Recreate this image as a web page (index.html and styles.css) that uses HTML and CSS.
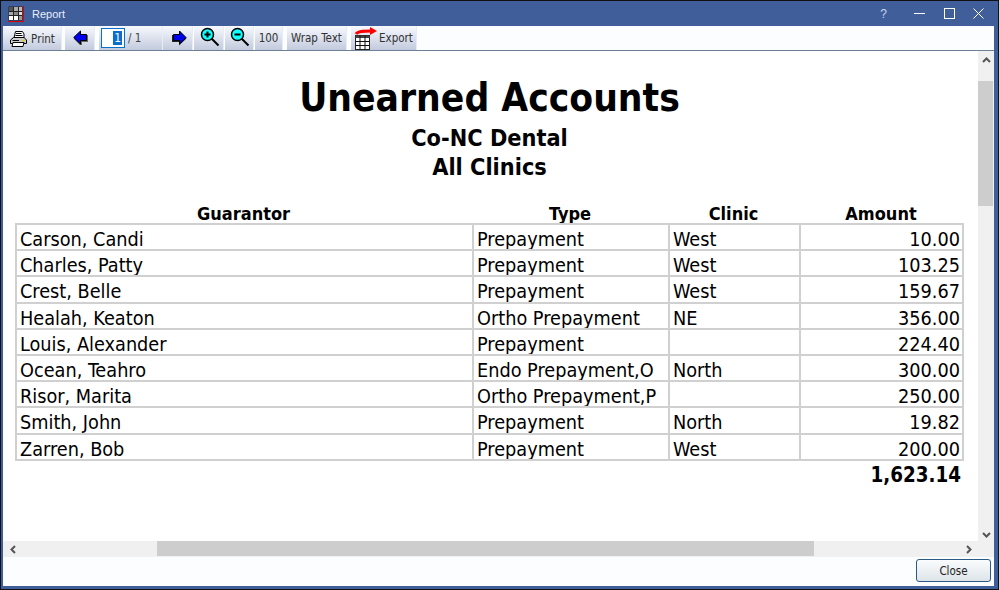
FILE: index.html
```html
<!DOCTYPE html>
<html lang="en">
<head>
<meta charset="utf-8">
<title>Report</title>
<link rel="stylesheet" href="styles.css">
</head>
<body>
<div class="window">
  <header class="titlebar">
    <svg class="app-icon" width="16" height="16" viewBox="0 0 16 16">
      <rect x="0.500" y="0.500" width="14" height="14" fill="#222"/>
      <path d="M0 15.500H15.500V0" fill="none" stroke="#d00"/>
      <g fill="#ddd"><rect x="1" y="1" width="4" height="4" fill="#555"/><rect x="6" y="1" width="4" height="4" fill="#aaa"/><rect x="11" y="1" width="3" height="4" fill="#bbb"/><rect x="1" y="6" width="4" height="3" fill="#aaa"/><rect x="6" y="6" width="4" height="3" fill="#888"/><rect x="11" y="6" width="3" height="3"/><rect x="1" y="10" width="4" height="4" fill="#fff"/><rect x="6" y="10" width="4" height="4" fill="#fff"/><rect x="11" y="10" width="3" height="4" fill="#999"/></g>
    </svg>
    <span class="title">Report</span>
    <span class="help">?</span>
    <svg class="win-btn min" width="11" height="11" viewBox="0 0 11 11"><path d="M0 5.500H11" stroke="#fff"/></svg>
    <svg class="win-btn max" width="11" height="11" viewBox="0 0 11 11"><rect x="0.500" y="0.500" width="10" height="10" fill="none" stroke="#fff"/></svg>
    <svg class="win-btn close-x" width="11" height="11" viewBox="0 0 11 11"><path d="M0.500 0.500L10.500 10.500M10.500 0.500L0.500 10.500" stroke="#fff"/></svg>
  </header>

  <nav class="toolbar">
    <div class="tool t-print">
      <svg width="17" height="16" viewBox="0 0 17 16"><path d="M5.500 0.500H12.500L14 3V7H4Z" fill="#fff" stroke="#000"/><path d="M6 2.500H11.500M5.500 4.500H12.500" stroke="#000"/><path d="M3.500 6.500H14L16.500 9V12.500H0.500V9Z" fill="#ccc" stroke="#000"/><path d="M2.500 9.500H9" stroke="#000"/><path d="M12 9.500H14.500" stroke="#dc0" stroke-width="1.500"/><path d="M3 11.500H14L13 15.500H2Z" fill="#fff" stroke="#000"/></svg>
      <span>Print</span>
    </div>
    <div class="tool t-nav">
      <svg width="16" height="16" viewBox="0 0 16 16"><path d="M15 5V12H9V15H7L1 9L7 2H8V5Z" fill="#666"/><path d="M13.500 4.500V10.500H7.500V14L0.700 7.500L7.500 1V4.500Z" fill="#00e" stroke="#000"/></svg>
    </div>
    <div class="tool t-page">
      <span class="page-box"><span class="page-sel">1</span></span>
      <span class="page-of">/ 1</span>
    </div>
    <div class="tool t-nav">
      <svg width="16" height="16" viewBox="0 0 16 16"><path d="M1 5H8V1L15.500 8.500L8 15.500V12H1Z" fill="#222"/><path d="M2.500 4.500H8.500V1L15 7.500L8.500 14V10.500H2.500Z" fill="#00e" stroke="#000"/></svg>
    </div>
    <div class="tool t-zoom">
      <svg width="20" height="20" viewBox="0 0 20 20"><path d="M11.500 11.500L18.500 18.500" stroke="#000" stroke-width="2"/><circle cx="7.500" cy="7.500" r="6" fill="#1ff" stroke="#000" stroke-width="1.500"/><path d="M4.500 7.500H10.500M7.500 4.500V10.500" stroke="#000" stroke-width="2"/></svg>
    </div>
    <div class="tool t-zoom t-zoomout">
      <svg width="20" height="20" viewBox="0 0 20 20"><path d="M11.500 11.500L18.500 18.500" stroke="#000" stroke-width="2"/><circle cx="7.500" cy="7.500" r="6" fill="#1ff" stroke="#000" stroke-width="1.500"/><path d="M4.500 7.500H10.500" stroke="#000" stroke-width="2"/></svg>
    </div>
    <div class="tool t-100">100</div>
    <div class="tool t-wrap">Wrap Text</div>
    <div class="tool t-export">
      <svg width="23" height="23" viewBox="0 0 23 23"><path d="M2 7C4 4 9 4 17 4" fill="none" stroke="#f00" stroke-width="3"/><path d="M16 0L23 4L16 8Z" fill="#f00"/><rect x="1.500" y="8.500" width="14" height="14" fill="#fff" stroke="#222"/><path d="M1.500 8.500H15.500V11H1.500Z" fill="#444"/><path d="M1.500 14.500H15.500M1.500 18.500H15.500M6 8.500V22.500M11 8.500V22.500" stroke="#111"/></svg>
      <span>Export</span>
    </div>
  </nav>

  <div class="viewer">
    <main class="canvas">
      <div class="sheet">
        <h1 class="r-title">Unearned Accounts</h1>
        <h2 class="r-sub">Co-NC Dental</h2>
        <h2 class="r-sub">All Clinics</h2>
        <div class="report-head">
          <span>Guarantor</span><span>Type</span><span>Clinic</span><span>Amount</span>
        </div>
        <table class="report">
          <tr><td>Carson, Candi</td><td>Prepayment</td><td>West</td><td class="num">10.00</td></tr>
          <tr><td>Charles, Patty</td><td>Prepayment</td><td>West</td><td class="num">103.25</td></tr>
          <tr><td>Crest, Belle</td><td>Prepayment</td><td>West</td><td class="num">159.67</td></tr>
          <tr><td>Healah, Keaton</td><td>Ortho Prepayment</td><td>NE</td><td class="num">356.00</td></tr>
          <tr><td>Louis, Alexander</td><td>Prepayment</td><td></td><td class="num">224.40</td></tr>
          <tr><td>Ocean, Teahro</td><td>Endo Prepayment,O</td><td>North</td><td class="num">300.00</td></tr>
          <tr><td>Risor, Marita</td><td>Ortho Prepayment,P</td><td></td><td class="num">250.00</td></tr>
          <tr><td>Smith, John</td><td>Prepayment</td><td>North</td><td class="num">19.82</td></tr>
          <tr><td>Zarren, Bob</td><td>Prepayment</td><td>West</td><td class="num">200.00</td></tr>
        </table>
        <div class="total">1,623.14</div>
      </div>
    </main>
    <aside class="vscroll">
      <svg width="9" height="6" viewBox="0 0 9 6"><path d="M1 5L4.500 1.500L8 5" fill="none" stroke="#555" stroke-width="2"/></svg>
      <div class="vtrack"><div class="vthumb"></div></div>
      <svg width="9" height="6" viewBox="0 0 9 6"><path d="M1 1L4.500 4.500L8 1" fill="none" stroke="#555" stroke-width="2"/></svg>
    </aside>
  </div>
  <div class="hscroll">
    <svg width="6" height="9" viewBox="0 0 6 9"><path d="M5 1L1.500 4.500L5 8" fill="none" stroke="#555" stroke-width="2"/></svg>
    <div class="htrack"><div class="hthumb"></div></div>
    <svg width="6" height="9" viewBox="0 0 6 9"><path d="M1 1L4.500 4.500L1 8" fill="none" stroke="#555" stroke-width="2"/></svg>
  </div>
  <footer class="actions">
    <button class="close-btn" type="button">Close</button>
  </footer>
</div>
</body>
</html>
```

FILE: styles.css
```css
* { box-sizing: border-box; }
html, body { margin: 0; height: 100%; }
body { font-family: "DejaVu Sans Condensed", "DejaVu Sans", sans-serif; background: #fff; overflow: hidden; }

.window { width: 999px; height: 590px; display: flex; flex-direction: column; border: 1px solid #111; padding: 0 4px 3px 2px; background: #3f5e9a; }

.titlebar { height: 25px; flex: none; display: flex; align-items: center; color: #fff; margin: 0 -4px 0 -2px; padding: 0 0 0 7px; background: #3f5e9a; }
.app-icon { flex: none; }
.title { margin-left: 8px; font: 11px "Liberation Sans", sans-serif; color: #e8eefa; flex: 1; }
.help { font: 12px "Liberation Sans", sans-serif; color: #c8d4ee; margin-right: 27px; }
.win-btn { flex: none; }
.min { margin-right: 19px; }
.max { margin-right: 18px; }
.close-x { margin-right: 14px; }

.toolbar { height: 25px; flex: none; display: flex; background: #fcfdff; border-bottom: 1px solid #6e7f96; font: 11.500px "DejaVu Sans Condensed", "Liberation Sans", sans-serif; color: #333; }
.tool { height: 24px; display: flex; align-items: center; justify-content: center; background: linear-gradient(#f7f9fd, #c2cadd); margin-right: 1px; border-right: 1px solid #e8ecf4; }
.tool span { white-space: nowrap; }
.t-print { width: 59px; gap: 4px; margin-right: 3px; padding-top: 1px; padding-left: 1px; }
.t-nav { width: 30px; padding-left: 3px; }
.t-page { width: 64px; gap: 3px; margin-left: 3px; justify-content: flex-start; padding-left: 2px; margin-right: 0; }
.t-zoom { width: 30px; padding-bottom: 2px; padding-left: 2px; }
.t-zoomout { width: 29px; }
.t-100 { width: 28px; margin-right: 4px; }
.t-wrap { width: 60px; margin-right: 4px; }
.t-export { width: 66px; gap: 2px; justify-content: flex-start; padding-left: 3px; }
.page-box { width: 24px; height: 20px; background: #fff; border: 1px solid #0a6ecb; display: flex; justify-content: flex-end; align-items: center; padding-right: 2px; }
.page-sel { background: #0a6ecb; color: #fff; font-size: 12px; line-height: 14px; padding: 0 1px; }
.page-of { color: #444; font-size: 11.500px; }

.viewer { flex: 1; min-height: 0; display: flex; }
.canvas { flex: 1; min-width: 0; background: #fff; overflow: hidden; }
.sheet { width: 975px; display: flex; flex-direction: column; align-items: stretch; padding: 22px 14px 0 12px; color: #000; }
.r-title { margin: 0; font-size: 38.600px; line-height: 50px; font-weight: 700; text-align: center; }
.r-sub { margin: 0; font-size: 23.300px; line-height: 29px; font-weight: 700; text-align: center; }
.report-head { margin-top: 22px; height: 20px; display: grid; grid-template-columns: 457px 196px 131px 164px; font-size: 18px; font-weight: 700; line-height: 21px; text-align: center; }
.report { border-collapse: collapse; table-layout: fixed; width: 949px; font-size: 19.700px; }
.report td { height: 26.200px; padding: 6px 2px 0 3px; border: 2px solid #d0d0d0; white-space: nowrap; overflow: hidden; line-height: 18px; vertical-align: top; }
.report td:nth-child(1) { width: 457px; }
.report td:nth-child(2) { width: 196px; }
.report td:nth-child(3) { width: 131px; }
.report td.num { text-align: right; }
.total { width: 948px; text-align: right; font-size: 20.400px; font-weight: 700; line-height: 28px; padding-right: 2px; }

.vscroll { width: 16px; flex: none; background: #f0f0f0; display: flex; flex-direction: column; align-items: center; justify-content: space-between; padding: 6px 0 3px; }
.vtrack { flex: 1; width: 100%; margin-top: 18px; margin-bottom: 12px; }
.vthumb { width: 15px; height: 125px; background: #cdcdcd; }
.hscroll { height: 16px; flex: none; display: flex; align-items: center; background: #f0f0f0; padding: 0 22px 0 7px; }
.htrack { flex: 1; height: 100%; margin-left: 4px; }
.hthumb { width: 657px; height: 15px; background: #cdcdcd; margin-left: 137px; }
.actions { height: 29px; flex: none; display: flex; justify-content: flex-end; align-items: flex-start; background: #fcfdff; padding: 2px 3px 0 0; }
.close-btn { width: 75px; height: 23px; border: 1px solid #2c5a86; border-radius: 3px; background: linear-gradient(#fafcfd, #dde4e8); font: 11.500px "DejaVu Sans Condensed", "Liberation Sans", sans-serif; color: #222; padding: 0; }
```
